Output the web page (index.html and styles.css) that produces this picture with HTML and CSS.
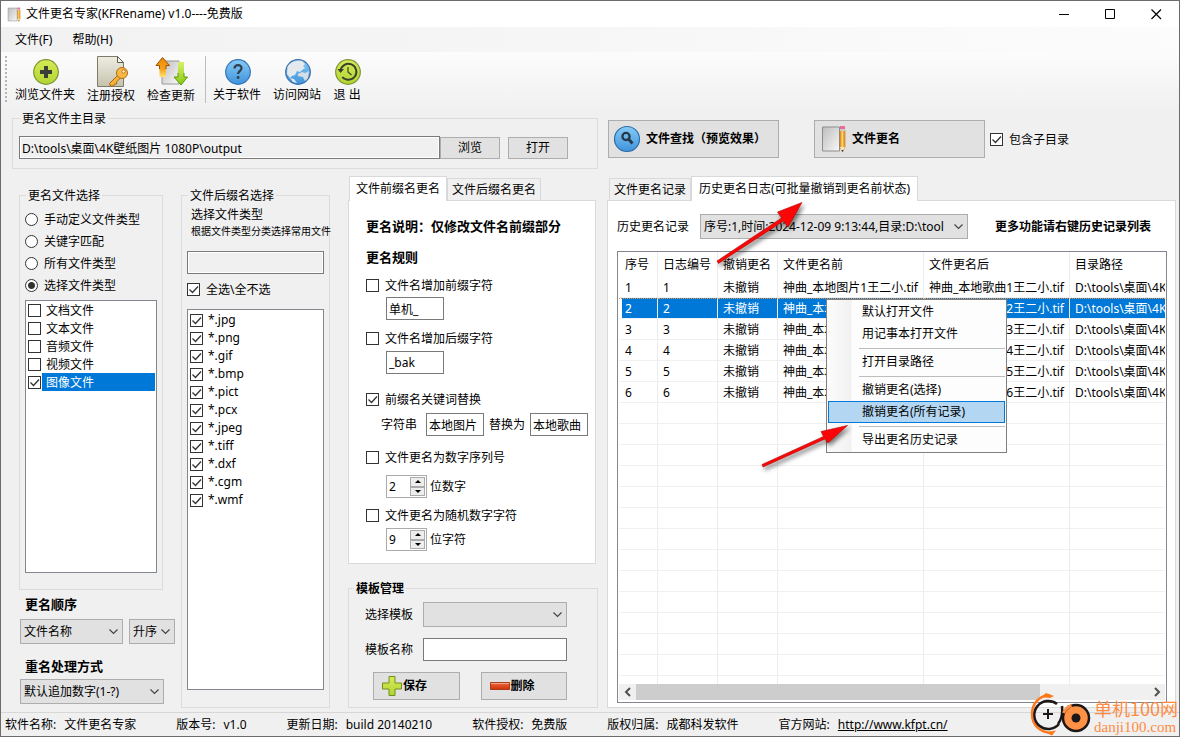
FILE: index.html
```html
<!DOCTYPE html>
<html lang="zh-CN">
<head>
<meta charset="utf-8">
<title>文件更名专家(KFRename) v1.0----免费版</title>
<link rel="stylesheet" href="styles.css">
</head>
<body>
<div class="window">
  <svg class="defs" width="0" height="0" aria-hidden="true">
    <defs>
      <linearGradient id="gGreen" x1="0" y1="0" x2="0" y2="1"><stop offset="0" stop-color="#d6ea55"/><stop offset="1" stop-color="#b2d434"/></linearGradient>
      <linearGradient id="gBlue" x1="0" y1="0" x2="0" y2="1"><stop offset="0" stop-color="#86cbf5"/><stop offset="1" stop-color="#3f93dc"/></linearGradient>
      <linearGradient id="gPaper" x1="0" y1="0" x2="1" y2="1"><stop offset="0" stop-color="#bdbdbd"/><stop offset="1" stop-color="#f8f8f8"/></linearGradient>
      <linearGradient id="gDoc" x1="0" y1="0" x2="0" y2="1"><stop offset="0" stop-color="#eeede2"/><stop offset="1" stop-color="#c5c3ad"/></linearGradient>
      <linearGradient id="gUp" x1="0" y1="0" x2="0" y2="1"><stop offset="0" stop-color="#f08a00"/><stop offset="0.6" stop-color="#f6a21c"/><stop offset="1" stop-color="#ffe27a"/></linearGradient>
      <linearGradient id="gDown" x1="0" y1="0" x2="0" y2="1"><stop offset="0" stop-color="#d9ef6c"/><stop offset="1" stop-color="#86cc0c"/></linearGradient>
      <linearGradient id="gRed" x1="0" y1="0" x2="0" y2="1"><stop offset="0" stop-color="#ee6a3f"/><stop offset="1" stop-color="#cf3008"/></linearGradient>
      <symbol id="notepad" viewBox="0 0 24 28">
        <path d="M1 2h17v24H1z" fill="url(#gPaper)" stroke="#8d8d8d"/>
        <path d="M18.500 5h5v17l-2.500 5-2.500-5z" fill="#f3a52c" stroke="#b06f16" stroke-width=".6"/>
        <path d="M20.800 5v17" stroke="#ffd98a" stroke-width="1.200"/>
        <path d="M18.500 1h5v3h-5z" fill="#ec6d91"/><path d="M18.500 4h5v2h-5z" fill="#c9c9c9"/>
        <path d="M18.500 22h5L21 27z" fill="#f6e3bd"/><path d="M20 25h2l-1 2z" fill="#333"/>
      </symbol>
    </defs>
  </svg>

  <header class="titlebar">
    <svg class="app-icon" width="14" height="15"><use href="#notepad"/></svg>
    <h1 class="title">文件更名专家(KFRename) v1.0----免费版</h1>
    <div class="caption-buttons">
      <button class="caption" aria-label="最小化"><svg width="11" height="11"><path d="M0 5.500h10" stroke="#000"/></svg></button>
      <button class="caption" aria-label="最大化"><svg width="11" height="11"><path d="M.5.5h9v9h-9z" fill="none" stroke="#000"/></svg></button>
      <button class="caption" aria-label="关闭"><svg width="11" height="11"><path d="M.5.5l9.500 9.500M10 .5L.5 10" stroke="#000" stroke-width="1.200"/></svg></button>
    </div>
  </header>

  <nav class="menubar">
    <button class="menu">文件(F)</button>
    <button class="menu">帮助(H)</button>
  </nav>

  <div class="toolbar">
    <span class="grip"></span>
    <button class="tool">
      <span class="tool-icon"><svg width="28" height="28" viewBox="0 0 28 28"><circle cx="15" cy="14" r="12.300" fill="url(#gGreen)" stroke="#7c9632" stroke-width="1.200"/><path d="M13 8h4v4h4v4h-4v4h-4v-4H9v-4h4z" fill="#3b3f35"/></svg></span>
      <span>浏览文件夹</span></button>
    <button class="tool">
      <span class="tool-icon"><svg width="34" height="32" viewBox="0 0 34 32"><path d="M3.500 .5h20l6 6v24h-26z" fill="url(#gDoc)" stroke="#7d7b68"/><path d="M23.500 .5v6h6z" fill="#f6f5ec" stroke="#5c5b4e"/><path d="M24 19l-8.500 8.500 1 2.500h3l1-2h2l.5-2.500 4-4" fill="#f7b23c" stroke="#a9660f"/><circle cx="28" cy="17" r="5.500" fill="#fbb844" stroke="#b06c12"/><circle cx="29.500" cy="15.500" r="1.700" fill="#fff3cf" stroke="#a9660f" stroke-width=".8"/></svg></span>
      <span>注册授权</span></button>
    <button class="tool">
      <span class="tool-icon"><svg width="34" height="32" viewBox="0 0 34 32"><path d="M8 5h17v23H8z" fill="url(#gPaper)" stroke="#999"/><path d="M5.500 21V9.500H2L8.500 1.500l7 8H12v11.500z" fill="url(#gUp)"/><path d="M5.500 13V9.500H2L8.500 1.500l7 8H12V13" fill="none" stroke="#9a5200"/><path d="M24 6h6v15h3.500L27 29 20 21h4z" fill="url(#gDown)"/><path d="M30 17v4h3.500L27 29 20 21h4v-4" fill="none" stroke="#5c940b"/></svg></span>
      <span>检查更新</span></button>
    <span class="tool-sep"></span>
    <button class="tool">
      <span class="tool-icon"><svg width="28" height="28" viewBox="0 0 28 28"><circle cx="15" cy="14" r="12.300" fill="url(#gBlue)" stroke="#3275b8" stroke-width="1.200"/><path d="M11.500 10.500c.2-4.500 7-4.300 7-.5 0 3-3.400 2.700-3.400 6" fill="none" stroke="#333f4c" stroke-width="2.200"/><circle cx="15.100" cy="19.500" r="1.400" fill="#333f4c"/></svg></span>
      <span>关于软件</span></button>
    <button class="tool">
      <span class="tool-icon"><svg width="28" height="28" viewBox="0 0 28 28"><circle cx="15" cy="14" r="12.300" fill="url(#gBlue)" stroke="#3c6ea8" stroke-width="1.200"/><path d="M4.500 9C7 4 13 2 19 3l3 3-2 2 2 2-3 2-2 2-3-1-2 4-3 1-2 2-3-4z" fill="#e4e9ee"/><path d="M15 16l4-2 3 1 4-2-1 7-3 3-2-4-5-1z" fill="#d5dee6"/><path d="M7 20l4 1 3 4-4-1z" fill="#dfe6ec"/></svg></span>
      <span>访问网站</span></button>
    <button class="tool">
      <span class="tool-icon"><svg width="28" height="28" viewBox="0 0 28 28"><circle cx="15" cy="14" r="12.300" fill="url(#gGreen)" stroke="#7c9632" stroke-width="1.200"/><path d="M7.500 12.500a8 8 0 1 1 1.800 6.500" fill="none" stroke="#3a4030" stroke-width="1.900"/><path d="M4.500 11h6.500l-3.500 4z" fill="#3a4030"/><path d="M15 9v5l3.500 3" fill="none" stroke="#3a4030" stroke-width="1.200"/></svg></span>
      <span>退 出</span></button>
  </div>

  <main class="main">
    <section class="left">
      <fieldset class="group dir">
        <legend>更名文件主目录</legend>
        <div class="dir-row">
          <input class="text dir-path" type="text" aria-label="更名文件主目录" value="D:\tools\桌面\4K壁纸图片 1080P\output" readonly>
          <button class="btn dir-btn">浏览</button>
          <button class="btn dir-btn open">打开</button>
        </div>
      </fieldset>

      <div class="columns">
        <div class="col-type">
          <fieldset class="group type-group">
            <legend>更名文件选择</legend>
            <label class="radio-row"><input type="radio" name="mode"><span>手动定义文件类型</span></label>
            <label class="radio-row"><input type="radio" name="mode"><span>关键字匹配</span></label>
            <label class="radio-row"><input type="radio" name="mode"><span>所有文件类型</span></label>
            <label class="radio-row"><input type="radio" name="mode" checked><span>选择文件类型</span></label>
            <div class="list">
              <label class="item"><input type="checkbox"><span>文档文件</span></label>
              <label class="item"><input type="checkbox"><span>文本文件</span></label>
              <label class="item"><input type="checkbox"><span>音频文件</span></label>
              <label class="item"><input type="checkbox"><span>视频文件</span></label>
              <label class="item selected"><input type="checkbox" checked><span>图像文件</span></label>
            </div>
          </fieldset>
          <h2 class="strong">更名顺序</h2>
          <div class="order-row">
            <select class="sort-key" aria-label="更名顺序"><option>文件名称</option></select>
            <select class="sort-dir" aria-label="升序或降序"><option>升序</option></select>
          </div>
          <h2 class="strong">重名处理方式</h2>
          <select class="conflict" aria-label="重名处理方式"><option>默认追加数字(1-?)</option></select>
        </div>

        <fieldset class="group ext-group">
          <legend>文件后缀名选择</legend>
          <p class="ext-line">选择文件类型</p>
          <p class="ext-note">根据文件类型分类选择常用文件</p>
          <input class="text ext-input" type="text" aria-label="文件类型" readonly>
          <label class="check-all"><input type="checkbox" checked><span>全选\全不选</span></label>
          <div class="list">
            <label class="item"><input type="checkbox" checked><span>*.jpg</span></label>
            <label class="item"><input type="checkbox" checked><span>*.png</span></label>
            <label class="item"><input type="checkbox" checked><span>*.gif</span></label>
            <label class="item"><input type="checkbox" checked><span>*.bmp</span></label>
            <label class="item"><input type="checkbox" checked><span>*.pict</span></label>
            <label class="item"><input type="checkbox" checked><span>*.pcx</span></label>
            <label class="item"><input type="checkbox" checked><span>*.jpeg</span></label>
            <label class="item"><input type="checkbox" checked><span>*.tiff</span></label>
            <label class="item"><input type="checkbox" checked><span>*.dxf</span></label>
            <label class="item"><input type="checkbox" checked><span>*.cgm</span></label>
            <label class="item"><input type="checkbox" checked><span>*.wmf</span></label>
          </div>
        </fieldset>

        <div class="col-rules">
          <div class="tabs">
            <button class="tab active">文件前缀名更名</button>
            <button class="tab">文件后缀名更名</button>
          </div>
          <div class="panel rules">
            <h2 class="strong">更名说明：仅修改文件名前缀部分</h2>
            <h2 class="strong rules-title">更名规则</h2>
            <div class="rule">
              <label class="check"><input type="checkbox"><span>文件名增加前缀字符</span></label>
              <div class="rule-body"><input class="text short" type="text" aria-label="前缀字符" value="单机_"></div>
            </div>
            <div class="rule">
              <label class="check"><input type="checkbox"><span>文件名增加后缀字符</span></label>
              <div class="rule-body"><input class="text short" type="text" aria-label="后缀字符" value="_bak"></div>
            </div>
            <div class="rule">
              <label class="check"><input type="checkbox" checked><span>前缀名关键词替换</span></label>
              <div class="rule-body replace">
                <label class="pair">字符串<input class="text short" type="text" value="本地图片"></label>
                <label class="pair close">替换为<input class="text short" type="text" value="本地歌曲"></label>
              </div>
            </div>
            <div class="rule">
              <label class="check"><input type="checkbox"><span>文件更名为数字序列号</span></label>
              <div class="rule-body">
                <span class="spin"><input id="digits" type="text" value="2"><span class="spin-btns"><button class="up" aria-label="增加"></button><button class="down" aria-label="减少"></button></span></span>
                <label for="digits">位数字</label>
              </div>
            </div>
            <div class="rule">
              <label class="check"><input type="checkbox"><span>文件更名为随机数字字符</span></label>
              <div class="rule-body">
                <span class="spin"><input id="chars" type="text" value="9"><span class="spin-btns"><button class="up" aria-label="增加"></button><button class="down" aria-label="减少"></button></span></span>
                <label for="chars">位字符</label>
              </div>
            </div>
          </div>
          <fieldset class="group template">
            <legend class="bold">模板管理</legend>
            <div class="field"><label for="tpl">选择模板</label><select id="tpl"><option></option></select></div>
            <div class="field"><label for="tplname">模板名称</label><input id="tplname" class="text" type="text"></div>
            <div class="tpl-btns">
              <button class="btn bold tpl-btn"><svg width="22" height="22" viewBox="0 0 22 22"><path d="M8 1.500h6V8h6.500v6H14v6.500H8V14H1.500V8H8z" fill="url(#gGreen)" stroke="#6f8f1e"/></svg>保存</button>
              <button class="btn bold tpl-btn"><svg width="22" height="22" viewBox="0 0 22 22"><path d="M1.500 7.500h19v7h-19z" fill="url(#gRed)" stroke="#a83a1c"/><path d="M2 8.500h18" stroke="#f5a184"/></svg>删除</button>
            </div>
          </fieldset>
        </div>
      </div>
    </section>

    <section class="right">
      <div class="actions">
        <button class="btn bold action"><svg width="28" height="30" viewBox="0 0 28 30"><circle cx="14" cy="15" r="12.500" fill="url(#gBlue)" stroke="#2c6da8" stroke-width="1.200"/><circle cx="13" cy="12.500" r="3.600" fill="none" stroke="#26384a" stroke-width="2.300"/><path d="M15.500 15l4 4.500" stroke="#26384a" stroke-width="2.800"/></svg>文件查找（预览效果）</button>
        <button class="btn bold action"><svg width="28" height="30" viewBox="0 0 28 30"><use href="#notepad" x="2" y="1" width="25" height="28"/></svg>文件更名</button>
        <label class="check sub"><input type="checkbox" checked><span>包含子目录</span></label>
      </div>
      <div class="tabs">
        <button class="tab">文件更名记录</button>
        <button class="tab active">历史更名日志(可批量撤销到更名前状态)</button>
      </div>
      <div class="panel history">
        <div class="history-head">
          <label for="hist">历史更名记录</label>
          <select id="hist"><option>序号:1,时间:2024-12-09 9:13:44,目录:D:\tool</option></select>
          <strong class="bold hint">更多功能请右键历史记录列表</strong>
        </div>
        <div class="log">
          <div class="log-view">
            <table class="log-table">
              <colgroup><col class="c1"><col class="c2"><col class="c2"><col class="c3"><col class="c3"><col></colgroup>
              <thead><tr><th>序号</th><th>日志编号</th><th>撤销更名</th><th>文件更名前</th><th>文件更名后</th><th>目录路径</th></tr></thead>
              <tbody>
                <tr><td>1</td><td>1</td><td>未撤销</td><td>神曲_本地图片1王二小.tif</td><td>神曲_本地歌曲1王二小.tif</td><td>D:\tools\桌面\4K</td></tr>
                <tr class="selected"><td>2</td><td>2</td><td>未撤销</td><td>神曲_本地图片2王二小.tif</td><td>神曲_本地歌曲2王二小.tif</td><td>D:\tools\桌面\4K</td></tr>
                <tr><td>3</td><td>3</td><td>未撤销</td><td>神曲_本地图片3王二小.tif</td><td>神曲_本地歌曲3王二小.tif</td><td>D:\tools\桌面\4K</td></tr>
                <tr><td>4</td><td>4</td><td>未撤销</td><td>神曲_本地图片4王二小.tif</td><td>神曲_本地歌曲4王二小.tif</td><td>D:\tools\桌面\4K</td></tr>
                <tr><td>5</td><td>5</td><td>未撤销</td><td>神曲_本地图片5王二小.tif</td><td>神曲_本地歌曲5王二小.tif</td><td>D:\tools\桌面\4K</td></tr>
                <tr><td>6</td><td>6</td><td>未撤销</td><td>神曲_本地图片6王二小.tif</td><td>神曲_本地歌曲6王二小.tif</td><td>D:\tools\桌面\4K</td></tr>
                <tr><td></td><td></td><td></td><td></td><td></td><td></td></tr>
                <tr><td></td><td></td><td></td><td></td><td></td><td></td></tr>
                <tr><td></td><td></td><td></td><td></td><td></td><td></td></tr>
                <tr><td></td><td></td><td></td><td></td><td></td><td></td></tr>
                <tr><td></td><td></td><td></td><td></td><td></td><td></td></tr>
                <tr><td></td><td></td><td></td><td></td><td></td><td></td></tr>
                <tr><td></td><td></td><td></td><td></td><td></td><td></td></tr>
                <tr><td></td><td></td><td></td><td></td><td></td><td></td></tr>
                <tr><td></td><td></td><td></td><td></td><td></td><td></td></tr>
                <tr><td></td><td></td><td></td><td></td><td></td><td></td></tr>
                <tr><td></td><td></td><td></td><td></td><td></td><td></td></tr>
                <tr><td></td><td></td><td></td><td></td><td></td><td></td></tr>
                <tr><td></td><td></td><td></td><td></td><td></td><td></td></tr>
                <tr><td></td><td></td><td></td><td></td><td></td><td></td></tr>
              </tbody>
            </table>
          </div>
          <div class="scroll">
            <button class="scroll-btn" aria-label="向左"><svg width="8" height="10"><path d="M6 1L2 5l4 4" fill="none" stroke="#505050" stroke-width="2"/></svg></button>
            <div class="track"><div class="thumb" style="width:79%"></div></div>
            <button class="scroll-btn" aria-label="向右"><svg width="8" height="10"><path d="M2 1l4 4-4 4" fill="none" stroke="#505050" stroke-width="2"/></svg></button>
          </div>
          <div class="context" role="menu">
            <button role="menuitem">默认打开文件</button>
            <button role="menuitem">用记事本打开文件</button>
            <hr>
            <button role="menuitem">打开目录路径</button>
            <hr>
            <button role="menuitem">撤销更名(选择)</button>
            <button role="menuitem" class="hot">撤销更名(所有记录)</button>
            <hr>
            <button role="menuitem">导出更名历史记录</button>
          </div>
        </div>
        <svg class="arrow one" width="96" height="72" viewBox="0 0 96 72"><path d="M4 61L68.500 18 64.500 12 89 2.500 75 27 70.500 21 5.500 63.500z" fill="#fb0606" stroke="#b40808" stroke-width=".6"/></svg>
        <svg class="arrow two" width="96" height="50" viewBox="0 0 96 50"><path d="M4 41.500L65.500 13.500 63 8.500 89.500 2.500 70 20 67 16 5 44z" fill="#fb0606" stroke="#b40808" stroke-width=".6"/></svg>
      </div>
    </section>
  </main>

  <footer class="status">
    <span class="stat"><span>软件名称:</span><span>文件更名专家</span></span>
    <span class="stat"><span>版本号:</span><span>v1.0</span></span>
    <span class="stat"><span>更新日期:</span><span>build 20140210</span></span>
    <span class="stat"><span>软件授权:</span><span>免费版</span></span>
    <span class="stat"><span>版权归属:</span><span>成都科发软件</span></span>
    <span class="stat"><span>官方网站:</span><a href="http://www.kfpt.cn/">http://www.kfpt.cn/</a></span>
    <div class="mark">
      <svg width="64" height="44" viewBox="0 0 64 44">
        <path d="M21 3.500C10 3 3 12 3 22c0 11 8 19 21 19" fill="none" stroke="#ff7a1a" stroke-width="2.500"/>
        <path d="M12 5l5-4 8 3-4 2zM16 40.500l11-2-4 5z" fill="#ff7a1a"/>
        <path d="M28 12A14 14 0 1 0 30 32" fill="none" stroke="#1d1718" stroke-width="2.500"/>
        <path d="M33 14c1 8-1 14-4 18M34 21l6-7" fill="none" stroke="#1d1718" stroke-width="2.500"/>
        <path d="M19 17v10M14 22h10" stroke="#1d1718" stroke-width="2"/>
        <circle cx="47" cy="26" r="13" fill="#ff9147" stroke="#1d1718" stroke-width="2.500"/>
        <path d="M34.500 21a13 13 0 0 1 8-7.500" fill="none" stroke="#ff9147" stroke-width="3"/>
        <circle cx="47" cy="26" r="4.500" fill="#1d1718"/>
      </svg>
      <span class="mark-text"><span class="mark-cn">单机100网</span><span class="mark-url">danji100.com</span></span>
    </div>
  </footer>
</div>
</body>
</html>
```
FILE: styles.css
```css
* { box-sizing: border-box; }
body, h1, h2, p, fieldset, legend, hr { margin: 0; padding: 0; }
body, button, input, select {
  font: 12px/16px "Noto Sans", "Noto Sans CJK SC", sans-serif;
  color: #000;
}
button { border: 0; background: none; padding: 0; white-space: nowrap; }
svg { display: block; flex: none; }
.defs { position: absolute; }

.window {
  display: flex;
  flex-direction: column;
  min-height: 100vh;
  background: #f0f0f0;
  border: 1px solid #6c6c6c;
}

.titlebar { display: flex; align-items: center; height: 26px; padding-left: 6px; background: #fff; }
.title { flex: 1; margin-left: 5px; font-size: 12px; font-weight: 400; }
.caption-buttons { display: flex; }
.caption { display: flex; width: 46px; height: 26px; align-items: center; justify-content: center; }

.menubar { display: flex; gap: 20px; height: 25px; padding: 1px 0 0 14px; background: linear-gradient(90deg, #f1f1f1, #fcfcfc); }

.toolbar {
  display: flex;
  gap: 12px;
  height: 55px;
  padding: 4px;
  background: linear-gradient(#fcfcfc, #f1f1f1);
}
.grip { width: 2px; margin-right: -4px; background: repeating-linear-gradient(#b4b4b4 0 2px, transparent 2px 4px); }
.tool { display: flex; flex-direction: column; align-items: center; }
.tool-icon { display: flex; align-items: center; justify-content: center; height: 32px; }
.tool-sep { width: 1px; margin: 0 -5px 0 -2px; background: #bdbdbd; }

.main { flex: 1; display: grid; grid-template-columns: 586px minmax(0, 1fr); gap: 9px; padding: 3px 3px 4px 11px; }
.left, .right { display: flex; flex-direction: column; min-height: 0; }

.group { min-width: 0; border: 1px solid #dcdcdc; padding: 0 5px; }
.group legend { padding: 1px 2px 0; height: 16px; line-height: 16px; }
.bold { font-weight: 700; }
.strong { font-size: 13px; line-height: 18px; font-weight: 700; }

.dir { padding: 10px 29px 9px 6px; }
.dir-row { display: flex; align-items: center; }
.dir-path { flex: 1; }
.dir-btn { width: 60px; height: 22px; }
.open { margin-left: 8px; }

.text { min-width: 0; height: 23px; border: 1px solid #7a7a7a; background: #fff; padding: 0 2px; outline: 0; }
.text:read-only { background: #f0f0f0; box-shadow: inset 0 0 0 1px #fff; }
.btn { background: #e1e1e1; border: 1px solid #adadad; }
select {
  appearance: none;
  height: 25px;
  min-width: 0;
  padding: 0 16px 0 3px;
  border: 1px solid #adadad;
  border-radius: 0;
  background: #e1e1e1 url("data:image/svg+xml,%3Csvg xmlns='http://www.w3.org/2000/svg' width='9' height='6'%3E%3Cpath d='M.5.5l4 4 4-4' fill='none' stroke='%23444' stroke-width='1.200'/%3E%3C/svg%3E") no-repeat right 4px center;
}

input[type="checkbox"], input[type="radio"] {
  appearance: none;
  flex: none;
  width: 13px;
  height: 13px;
  margin: 0;
  border: 1px solid #333;
  background: #fff;
}
input[type="checkbox"]:checked {
  background: #fff url("data:image/svg+xml,%3Csvg xmlns='http://www.w3.org/2000/svg' width='11' height='11'%3E%3Cpath d='M1.500 5.500l3 3 5.500-6' fill='none' stroke='%23333' stroke-width='1.300'/%3E%3C/svg%3E");
}
input[type="radio"] { border-radius: 50%; }
input[type="radio"]:checked { background: radial-gradient(circle, #333 0 3px, #fff 4px); }

.columns { flex: 1; display: flex; padding: 7px 0 0 7px; }
.col-type { flex: none; display: flex; flex-direction: column; width: 156px; margin-right: 6px; padding: 11px 0 4px; }
.type-group { flex: 1; display: flex; flex-direction: column; width: 144px; padding-bottom: 16px; margin-bottom: 5px; }
.radio-row { display: flex; align-items: center; gap: 6px; height: 22px; }
.radio-row span, .check span { padding-top: 2px; }
.type-group legend + .radio-row { margin-top: 5px; }
.list { flex: 1; border: 1px solid #828790; background: #fff; padding: 0 1px 0 2px; }
.type-group .list { width: 132px; margin-top: 4px; }
.item { display: flex; align-items: center; gap: 1px; }
.item span { flex: 1; padding-left: 4px; line-height: 18px; }
.type-group .item span { padding-top: 2px; line-height: 16px; }
.item.selected span { background: #0078d7; color: #fff; }
.col-type > .strong { margin-left: 6px; }
.order-row { display: flex; gap: 6px; margin: 6px 0 13px 1px; }
.sort-key { width: 103px; }
.sort-dir { width: 46px; }
.conflict { width: 144px; margin: 4px 0 0 1px; }

.ext-group { flex: none; display: flex; flex-direction: column; width: 149px; margin: 11px 18px 0 0; padding-bottom: 17px; }
.group legend { margin-left: 1px; }
.ext-line { margin: 3px 0 0 4px; line-height: 17px; }
.ext-note { margin-left: 4px; font-size: 10px; white-space: nowrap; }
.ext-input { width: 137px; margin-top: 12px; }
.check-all { display: flex; align-items: center; gap: 6px; margin: 6px 0 11px; height: 18px; }
.check-all span { padding-top: 2px; }
.ext-group .list { width: 137px; padding-top: 1px; }

.tabs { display: flex; align-items: flex-end; height: 25px; padding-left: 1px; }
.tab { height: 23px; padding: 0 4px; border: 1px solid #d9d9d9; background: #f0f0f0; }
.tab.active { z-index: 1; height: 25px; padding: 0 6px; background: #fff; border-bottom: 0; }
.panel { margin-top: -1px; border: 1px solid #d9d9d9; background: #fff; }

.col-rules { flex: 1; min-width: 0; display: flex; flex-direction: column; }
.rules { flex: 1; margin-right: 2px; padding: 16px 6px 12px 17px; }
.rules-title { margin-top: 13px; }
.check { display: flex; align-items: center; gap: 6px; height: 18px; }
.rule { margin-top: 10px; }
.rule + .rule { margin-top: 9px; }
.rule-body { display: flex; align-items: center; gap: 3px; margin: 4px 0 0 20px; height: 23px; }
.rules-title + .rule .rule-body { margin-top: 3px; }
.rule:nth-child(5) { margin-top: 16px; }
.rule:nth-child(6) { margin-top: 12px; }
.rule:nth-child(6) .rule-body { margin-top: 9px; }
.rule:nth-child(7) { margin-top: 8px; }
.short { width: 58px; }
.rule-body.replace { margin: 5px 0 0 15px; gap: 5px; }
.pair { display: flex; align-items: center; gap: 9px; white-space: nowrap; }
.pair.close { gap: 5px; }
.spin { display: flex; width: 41px; height: 23px; padding: 1px; border: 1px solid #ababab; background: #fff; }
.spin input { width: 22px; border: 0; padding: 0 1px; outline: 0; }
.spin-btns { display: flex; flex-direction: column; flex: 1; }
.spin-btns button { flex: 1; display: flex; align-items: center; justify-content: center; border: 1px solid #ababab; background: #ededed; }
.up::before, .down::before { content: ""; border: 3px solid transparent; }
.up::before { border-top: 0; border-bottom-color: #000; }
.down::before { border-bottom: 0; border-top-color: #000; }

.template { margin-top: 16px; padding: 6px 30px 7px 16px; }
.template legend { margin-left: -11px; }
.field { display: flex; align-items: center; gap: 10px; margin-bottom: 10px; height: 25px; }
.field select, .field input { flex: 1; }
.tpl-btns { display: flex; gap: 21px; padding-left: 8px; }
.tpl-btn { flex: 1; display: flex; align-items: center; height: 28px; padding-left: 7px; }

.actions { display: flex; align-items: center; margin: 10px 0 18px 1px; }
.action { display: flex; align-items: center; gap: 5px; width: 171px; height: 38px; padding-left: 4px; }
.action + .action { margin-left: 35px; }
.sub { margin-left: 5px; }
.right .tabs { padding-left: 2px; }
.right .tab.active { padding: 0 7px; }
.history { position: relative; flex: 1; display: flex; flex-direction: column; padding: 13px 8px 4px 9px; }
.history-head { display: flex; align-items: center; margin-bottom: 12px; }
.history-head select { width: 268px; margin: 0 27px 0 11px; }
.log { position: relative; flex: 1; display: flex; flex-direction: column; border: 1px solid #828790; padding: 0 1px 2px; }
.log-view { flex: 1 1 0; min-height: 0; overflow: hidden; }
.log-table { width: 100%; table-layout: fixed; border-collapse: separate; border-spacing: 0; }
.c1 { width: 39px; }
.c2 { width: 60px; }
.c3 { width: 146px; }
.log-table th, .log-table td { padding: 0 0 0 5px; border-right: 1px solid #ececec; text-align: left; font-weight: 400; white-space: nowrap; overflow: hidden; }
.log-table th { height: 25px; }
.log-table td { height: 21px; padding-top: 2px; border-bottom: 1px solid #f0f0f0; line-height: 18px; }
.log-table tr > :first-child { padding-left: 6px; }
.log-table tr > :last-child { border-right: 0; }
.log-table .selected td { padding-top: 1px; background: #0078d7; color: #fff; border-top: 1px dotted #e8954a; }
.log-table .selected td:first-child { background: linear-gradient(90deg, #fff 3px, #0078d7 3px); }
.scroll { display: flex; height: 16px; background: #f0f0f0; }
.scroll-btn { display: flex; align-items: center; justify-content: center; width: 17px; }
.track { flex: 1; }
.thumb { height: 16px; background: #cdcdcd; }

.context {
  position: absolute;
  left: 208px;
  top: 47px;
  width: 181px;
  padding: 1px;
  border: 1px solid #808080;
  background: linear-gradient(90deg, #fcfcfc, #f1f1f1 24px, #fdfdfd 25px);
}
.context button { display: block; width: 100%; height: 22px; padding-left: 33px; border: 1px solid transparent; text-align: left; }
.context .hot { border-color: #0078d7; background: #b3d7f3; }
.context hr { margin: 3px 0 2px 31px; border: 0; border-top: 1px solid #bdbdbd; }

.arrow { position: absolute; filter: drop-shadow(2px 3px 2px rgba(0, 0, 0, .5)); pointer-events: none; }
.one { left: 105px; top: -1px; }
.two { left: 150px; top: 222px; }

.status { position: relative; display: flex; gap: 40px; padding: 4px 4px 3px; border-top: 1px solid #d7d7d7; }
.stat { display: flex; gap: 8px; white-space: nowrap; }
.status a { color: #000; }
.mark { position: absolute; right: 1px; bottom: 0; display: flex; align-items: flex-end; gap: 1px; color: #ff8b42; }
.mark-text { display: flex; flex-direction: column; }
.mark-cn { font: 18px/20px "Noto Sans CJK SC", sans-serif; }
.mark-url { font: 15px/18px "Liberation Serif", serif; }
```
